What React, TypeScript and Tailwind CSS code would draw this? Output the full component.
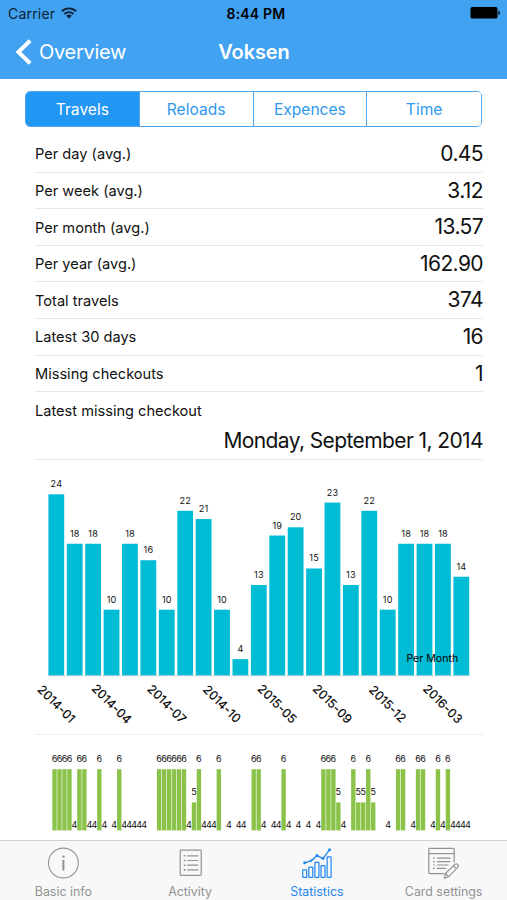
import React, { useState } from 'react';

const segments = ['Travels', 'Reloads', 'Expences', 'Time'];

const stats = [
  { label: 'Per day (avg.)', value: '0.45' },
  { label: 'Per week (avg.)', value: '3.12' },
  { label: 'Per month (avg.)', value: '13.57' },
  { label: 'Per year (avg.)', value: '162.90' },
  { label: 'Total travels', value: '374' },
  { label: 'Latest 30 days', value: '16' },
  { label: 'Missing checkouts', value: '1' },
];

const monthly = [24, 18, 18, 10, 18, 16, 10, 22, 21, 10, 4, 13, 19, 20, 15, 23, 13, 22, 10, 18, 18, 18, 14];

// One label for every third bar
const monthLabels = ['2014-01', '2014-04', '2014-07', '2014-10', '2015-05', '2015-09', '2015-12', '2016-03'];

// One character per week, a space is a week without a bar
const weekly =
  '66664664464 4644444  ' +
  '6666664564446 4 44 66' +
  '4 4464 4 4 4666' +
  '54 65565  4 66 4' +
  '66 46464444';

function WifiIcon() {
  return (
    <svg className="h-[12px] w-[16px]" viewBox="0 0 16 12">
      <g fill="none" stroke="#0b1f30" strokeWidth="1.9">
        <path d="M0.9 4.3a10.1 10.1 0 0 1 14.2 0" />
        <path d="M3.5 7a6.4 6.4 0 0 1 9 0" />
      </g>
      <path d="M8 11.6L5.2 8.8a4 4 0 0 1 5.6 0z" fill="#0b1f30" />
    </svg>
  );
}

function BatteryIcon() {
  return (
    <svg className="h-[12px] w-[31px]" viewBox="0 0 31 12" fill="#000">
      <rect x="0.5" y="0" width="27" height="11.6" rx="1.6" />
      <path d="M28.5 3.8c1.9.6 1.9 3.8 0 4.4z" />
    </svg>
  );
}

function InfoIcon() {
  return (
    <svg className="size-[32px]" viewBox="0 0 32 32" fill="none" stroke="currentColor">
      <circle cx="16.4" cy="16" r="14.9" strokeWidth="1.1" />
      <path d="M16.4 13v10.6" strokeWidth="2" />
      <circle cx="16.4" cy="9.6" r="1.2" fill="currentColor" stroke="none" />
    </svg>
  );
}

function ActivityIcon() {
  return (
    <svg className="size-[32px]" viewBox="0 0 32 32" fill="none" stroke="currentColor" strokeWidth="1.2">
      <rect x="6.2" y="3.2" width="21" height="25.2" rx="0.8" />
      <path d="M13.2 8.8h11M13.2 13.5h11M13.2 18.2h11M13.2 22.9h11" />
      <path d="M9.7 8.8h1.8M9.7 13.5h1.8M9.7 18.2h1.8M9.7 22.9h1.8" strokeWidth="1.6" />
    </svg>
  );
}

function StatisticsIcon() {
  return (
    <svg className="size-[32px]" viewBox="0 0 32 32" fill="none" stroke="currentColor" strokeWidth="1.2">
      <rect x="1.7" y="22.8" width="4" height="7.6" rx="0.6" />
      <rect x="7.8" y="20.2" width="4" height="10.2" rx="0.6" />
      <rect x="13.9" y="15.4" width="4" height="15" rx="0.6" />
      <rect x="20" y="18.6" width="4" height="11.8" rx="0.6" />
      <rect x="26.1" y="9.8" width="4" height="20.6" rx="0.6" />
      <path d="M3.7 15.8L10.5 13.6L16 8.6L22 11.6L28.6 2.6" strokeWidth="1.3" />
      <g fill="currentColor" stroke="none">
        <circle cx="3.7" cy="15.8" r="1.5" />
        <circle cx="10.2" cy="13.6" r="1.2" />
        <circle cx="16" cy="8.6" r="1.5" />
        <circle cx="22" cy="11.6" r="1.4" />
        <circle cx="28.6" cy="2.8" r="1.5" />
      </g>
    </svg>
  );
}

function CardIcon() {
  return (
    <svg className="size-[32px]" viewBox="0 0 32 32" fill="none" stroke="currentColor" strokeWidth="1.2">
      <path d="M16.2 26.6H1.8a1 1 0 0 1-1-1V2.4a1 1 0 0 1 1-1h23.4a1 1 0 0 1 1 1v13" />
      <path d="M0.8 6.6h25.4" />
      <path d="M9 11.2h13.5M9 14.6h13.5M9 18h11.5M9 21.4h9" />
      <path d="M5 11.2h1.8M5 14.6h1.8M5 18h1.8M5 21.4h1.8" />
      <path d="M16.3 31.2l1.3-4.8L27.1 17.2a1.6 1.6 0 0 1 2.3.1l.6.7a1.6 1.6 0 0 1-.1 2.2L20.6 29.8zM25.5 18.8l3 3M17.6 26.4l3 3.4" />
    </svg>
  );
}

const tabs = [
  { label: 'Basic info', icon: <InfoIcon /> },
  { label: 'Activity', icon: <ActivityIcon /> },
  { label: 'Statistics', icon: <StatisticsIcon /> },
  { label: 'Card settings', icon: <CardIcon /> },
];

function MonthChart() {
  const base = 215.6;
  return (
    <svg className="block h-[274px] w-full" viewBox="0 0 507 274">
      {monthly.map((v, i) => {
        const x = 48.4 + i * 18.41;
        const h = (v - 2) * 8.24;
        return (
          <g key={i}>
            <rect x={x} y={base - h} width="15.8" height={h} fill="#00bcd4" />
            <text x={x + 8} y={base - h - 7} fontSize="9.1" letterSpacing="0.2" textAnchor="middle" fill="#111">
              {v}
            </text>
          </g>
        );
      })}
      <path d="M48 215.8h421.5" stroke="#c9c9cf" strokeWidth="0.7" />
      {monthLabels.map((m, i) => (
        <text
          key={m}
          transform={`translate(${56.4 + i * 55.2} 244) rotate(45)`}
          y="4.2"
          fontSize="12.2"
          letterSpacing="0.15"
          textAnchor="middle"
          fill="#000"
          stroke="#000"
          strokeWidth="0.15"
        >
          {m}
        </text>
      ))}
      <text x="406.4" y="201.6" fontSize="10.6" fill="#000">
        Per Month
      </text>
    </svg>
  );
}

function WeekChart() {
  return (
    <svg className="block h-[104px] w-full" viewBox="0 0 507 104">
      {weekly.split('').map((c, i) => {
        if (c === ' ') return null;
        const cx = 54.5 + i * 4.98;
        const top = c === '6' ? 34.2 : c === '5' ? 67.4 : 100.4;
        return (
          <g key={i}>
            {c !== '4' && <rect x={cx - 2.2} y={top} width="4.4" height={95.4 - top} fill="#8bc34a" />}
            <text x={cx} y={top - 7} fontSize="9" textAnchor="middle" fill="#111">
              {c}
            </text>
          </g>
        );
      })}
    </svg>
  );
}

export default function App() {
  const [segment, setSegment] = useState('Travels');
  const [tab, setTab] = useState('Statistics');

  return (
    <div className="flex h-[900px] w-[507px] flex-col overflow-hidden bg-white font-['Inter',sans-serif] text-[#111]">
      <header className="h-[79px] shrink-0 bg-[#42a2f2] text-white">
        <div className="grid h-[26px] grid-cols-3 items-center pr-[6px] pl-2 text-[14px] text-[#0b1f30]">
          <div className="flex items-center gap-[6px]">
            <span className="tracking-[0.2px]">Carrier</span>
            <WifiIcon />
          </div>
          <span className="pl-[3px] text-center font-semibold tracking-[0.2px] text-black">8:44 PM</span>
          <div className="flex justify-end">
            <BatteryIcon />
          </div>
        </div>
        <div className="grid h-[52px] grid-cols-3 items-center pr-4 pl-[15px]">
          <button className="flex items-center gap-[7px] text-[20px] tracking-[-0.3px]">
            <svg className="h-[26px] w-[17px] shrink-0" viewBox="0 0 17 26" fill="none" stroke="#fff" strokeWidth="4">
              <path d="M15.2 1.6L3.4 13L15.2 24.4" />
            </svg>
            Overview
          </button>
          <h1 className="pl-[2px] text-center text-[20px] font-semibold tracking-[-0.1px]">Voksen</h1>
        </div>
      </header>

      <main className="min-h-0 flex-1">
        <div className="mx-[25px] mt-[12px] grid h-[36px] grid-cols-4 divide-x divide-[#4da6ee] overflow-hidden rounded-[5px] border border-[#4da6ee]">
          {segments.map((s) => (
            <button
              key={s}
              onClick={() => setSegment(s)}
              className={
                s === segment
                  ? 'bg-[#2196f3] pt-[2px] text-[15.6px] text-white'
                  : 'bg-white pt-[2px] text-[15.6px] text-[#2f98ec]'
              }
            >
              {s}
            </button>
          ))}
        </div>

        <div className="mt-[9px] ml-[35px] w-[448px]">
          {stats.map((s) => (
            <div key={s.label} className="flex h-[36.6px] items-center justify-between border-b border-[#e6e6e8]">
              <span className="pt-[3px] text-[14.6px]">{s.label}</span>
              <span className="text-[21px] tracking-[-0.6px]">{s.value}</span>
            </div>
          ))}
          <div className="flex h-[68.3px] flex-col border-b border-[#e6e6e8]">
            <span className="pt-[9px] text-[14.6px] leading-[20px]">Latest missing checkout</span>
            <span className="self-end text-[21px] leading-[40px] tracking-[-0.6px]">Monday, September 1, 2014</span>
          </div>
        </div>

        <MonthChart />
        <div className="ml-[35px] w-[448px] border-b border-[#efeff1]" />
        <WeekChart />
      </main>

      <nav className="z-10 grid h-[60px] shrink-0 grid-cols-4 border-t border-[#cfcfd1] bg-[#f8f8f8]">
        {tabs.map((t) => (
          <button
            key={t.label}
            onClick={() => setTab(t.label)}
            className={
              t.label === tab
                ? 'flex flex-col items-center pt-[6px] text-[#1f86f0]'
                : 'flex flex-col items-center pt-[6px] text-[#929292]'
            }
          >
            {t.icon}
            <span className="mt-[4px] text-[12.4px] leading-[18px]">{t.label}</span>
          </button>
        ))}
      </nav>
    </div>
  );
}
